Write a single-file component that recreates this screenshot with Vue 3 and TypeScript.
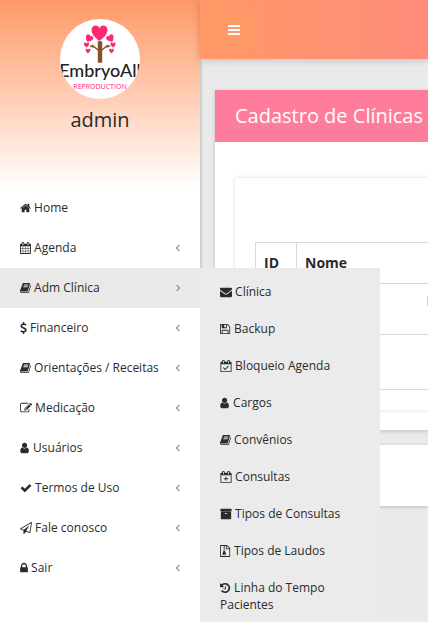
<script setup lang="ts">
import { ref } from 'vue'

interface Glyph { box: string; width: number; d: string }
interface Entry { icon: string; label: string; children?: boolean }

const calendarFrame = 'M576 448v-288q0-13-9.5-22.5t-22.5-9.5h-64q-13 0-22.5 9.5t-9.5 22.5v288q0 13 9.5 22.5t22.5 9.5h64q13 0 22.5-9.5t9.5-22.5zm768 0v-288q0-13-9.5-22.5t-22.5-9.5h-64q-13 0-22.5 9.5t-9.5 22.5v288q0 13 9.5 22.5t22.5 9.5h64q13 0 22.5-9.5t9.5-22.5zm384-64v1280q0 52-38 90t-90 38h-1408q-52 0-90-38t-38-90v-1280q0-52 38-90t90-38h128v-96q0-66 47-113t113-47h64q66 0 113 47t47 113v96h384v-96q0-66 47-113t113-47h64q66 0 113 47t47 113v96h128q52 0 90 38t38 90z'

const glyphs: Record<string, Glyph> = {
  home: { box: '64 0 1664 1792', width: 11, d: 'M1472 992v480q0 26-19 45t-45 19h-384v-384h-256v384h-384q-26 0-45-19t-19-45v-480q0-1 .5-3t.5-3l575-474 575 474q1 2 1 6zm223-69l-62 74q-8 9-21 11h-3q-13 0-21-7l-692-577-692 577q-12 8-24 7-13-2-21-11l-62-74q-8-10-7-23.5t11-21.5l719-599q32-26 76-26t76 26l244 204v-195q0-14 9-23t23-9h192q14 0 23 9t9 23v408l219 182q10 8 11 21.5t-7 23.5z' },
  calendar: { box: '64 0 1664 1792', width: 11, d: calendarFrame + 'M192 1664h288v-288h-288zM544 1664h320v-288h-320zM928 1664h320v-288h-320zM1312 1664h288v-288h-288zM192 1312h288v-320h-288zM544 1312h320v-320h-320zM928 1312h320v-320h-320zM1312 1312h288v-320h-288zM192 928h288v-288h-288zM544 928h320v-288h-320zM928 928h320v-288h-320zM1312 928h288v-288h-288z' },
  book: { box: '64 0 1664 1792', width: 11, d: 'M1703 478q40 57 18 129l-275 906q-19 64-76.5 107.5t-122.5 43.5h-923q-77 0-148.5-53.5t-99.5-131.5q-24-67-2-127 0-4 3-27t4-37q1-8-3-21.5t-3-19.5q2-11 8-21t16.5-23.5 16.5-23.5q23-38 45-91.5t30-91.5q3-10 .5-30t-.5-28q3-11 17-28t17-23q21-36 42-92t25-90q1-9-2.5-32t.5-28q4-13 22-30.5t22-22.5q19-26 42.5-84.5t27.5-96.5q1-8-3-25.5t-2-26.5q2-8 9-18t18-23 17-21q8-12 16.5-30.5t15-35 16-36 19.5-32 26.5-23.5 36-11.5 47.5 5.5l-1 3q38-9 51-9h761q74 0 114 56t18 130l-274 906q-36 119-71.5 153.5t-128.5 34.5h-869q-27 0-38 15-11 16-1 43 24 70 144 70h923q29 0 56-15.5t35-41.5l300-987q7-22 5-57 38 15 59 43zm-1064 2q-4 13 2 22.5t20 9.5h608q13 0 25.5-9.5t16.5-22.5l21-64q4-13-2-22.5t-20-9.5h-608q-13 0-25.5 9.5t-16.5 22.5zm-83 256q-4 13 2 22.5t20 9.5h608q13 0 25.5-9.5t16.5-22.5l21-64q4-13-2-22.5t-20-9.5h-608q-13 0-25.5 9.5t-16.5 22.5z' },
  dollar: { box: '384 0 1024 1792', width: 7, d: 'M1362 1185q0 153-99.5 263.5t-258.5 136.5v175q0 14-9 23t-23 9h-135q-13 0-22.5-9.5t-9.5-22.5v-175q-66-9-127.5-31t-101.5-44.5-74-48-46.5-37.5-17.5-18q-17-21-2-41l103-135q7-10 23-12 15-2 24 9l2 2q113 99 243 125 37 8 74 8 81 0 142.5-43t61.5-122q0-28-15-53t-33.5-42-58.5-37.5-66-32-80-32.5q-39-16-61.5-25t-61.5-26.5-62.5-31-56.5-35.5-53.5-42.5-43.5-49-35.5-58-21-66.5-8.5-78q0-138 98-242t255-134v-180q0-13 9.5-22.5t22.5-9.5h135q14 0 23 9t9 23v176q57 6 110.5 23t87 33.5 63.5 37.5 39 29 15 14q17 18 5 38l-81 146q-8 15-23 16-14 3-27-7-3-3-14.5-12t-39-26.5-58.5-32-74.5-26-85.5-11.5q-95 0-155 43t-60 111q0 26 8.5 48t29.5 41.5 39.5 33 56 31 60.5 27 70 27.5q53 20 81 31.5t76 35 75.5 42.5 62 50 53 63.5 31.5 76.5 13 94z' },
  edit: { box: '0 0 1792 1792', width: 12, d: 'M888 1184l116-116-152-152-116 116v56h96v96h56zm440-720q-16-16-33 1l-350 350q-17 17-1 33t33-1l350-350q17-17 1-33zm80 594v190q0 119-84.5 203.5t-203.5 84.5h-832q-119 0-203.5-84.5t-84.5-203.5v-832q0-119 84.5-203.5t203.5-84.5h832q63 0 117 25 15 7 18 23 3 17-9 29l-49 49q-14 14-32 8-23-6-45-6h-832q-66 0-113 47t-47 113v832q0 66 47 113t113 47h832q66 0 113-47t47-113v-126q0-13 9-22l64-64q15-15 35-7t20 29zm-96-738l288 288-672 672h-288v-288zm444 132l-92 92-288-288 92-92q28-28 68-28t68 28l152 152q28 28 28 68t-28 68z' },
  user: { box: '256 0 1408 1792', width: 10, d: 'M1536 1399q0 109-62.5 187t-150.5 78h-854q-88 0-150.5-78t-62.5-187q0-85 8.5-160.5t31.5-152 58.5-131 94-89 134.5-34.5q131 128 313 128t313-128q76 0 134.5 34.5t94 89 58.5 131 31.5 152 8.5 160.5zm-256-887q0 159-112.5 271.5t-271.5 112.5-271.5-112.5-112.5-271.5 112.5-271.5 271.5-112.5 271.5 112.5 112.5 271.5z' },
  check: { box: '0 0 1792 1792', width: 12, d: 'M1671 566q0 40-28 68l-724 724-136 136q-28 28-68 28t-68-28l-136-136-362-362q-28-28-28-68t28-68l136-136q28-28 68-28t68 28l294 295 656-657q28-28 68-28t68 28l136 136q28 28 28 68z' },
  plane: { box: '0 0 1792 1792', width: 12, d: 'M1764 11q33 24 27 64l-256 1536q-5 29-32 45-14 8-31 8-11 0-24-5l-527-215-298 327q-18 21-47 21-14 0-23-4-19-7-30-23.5t-11-36.5v-452l-472-193q-37-14-40-55-3-39 32-59l1664-960q35-21 68 2zm-342 1499l221-1323-1434 827 336 137 863-639-478 797z' },
  lock: { box: '320 0 1152 1792', width: 8, d: 'M640 768h512v-192q0-106-75-181t-181-75-181 75-75 181v192zm832 96v576q0 40-28 68t-68 28h-960q-40 0-68-28t-28-68v-576q0-40 28-68t68-28h32v-192q0-184 132-316t316-132 316 132 132 316v192h32q40 0 68 28t28 68z' },
  envelope: { box: '0 0 1792 1792', width: 12, d: 'M1792 710v794q0 66-47 113t-113 47h-1472q-66 0-113-47t-47-113v-794q44 49 101 87 362 246 497 345 57 42 92.5 65.5t94.5 48 110 24.5h2q51 0 110-24.5t94.5-48 92.5-65.5q170-123 498-345 57-39 100-87zm0-294q0 79-49 151t-122 123q-376 261-468 325-10 7-42.5 31t-54 38.5-52 32.5-57.5 27-50 9h-2q-23 0-50-9t-57.5-27-52-32.5-54-38.5-42.5-31q-91-64-262-182.5t-205-142.5q-62-42-117-115.5t-55-136.5q0-78 41.5-130t118.5-52h1472q65 0 112.5 47t47.5 113z' },
  floppy: { box: '128 0 1664 1792', width: 11, d: 'M512 1536h768v-384h-768v384zm896 0h128v-896q0-14-10-38.5t-20-34.5l-281-281q-10-10-34-20t-39-10v416q0 40-28 68t-68 28h-576q-40 0-68-28t-28-68v-416h-128v1280h128v-416q0-40 28-68t68-28h832q40 0 68 28t28 68v416zm-384-928v-320q0-13-9.5-22.5t-22.5-9.5h-192q-13 0-22.5 9.5t-9.5 22.5v320q0 13 9.5 22.5t22.5 9.5h192q13 0 22.5-9.5t9.5-22.5zm640 32v928q0 40-28 68t-68 28h-1344q-40 0-68-28t-28-68v-1344q0-40 28-68t68-28h928q40 0 88 20t76 48l280 280q28 28 48 76t20 88z' },
  calendarCheck: { box: '0 0 1792 1792', width: 12, d: calendarFrame + 'M192 1664h1408v-1024h-1408zM1303 964l-512 512q-10 9-23 9t-23-9l-288-288q-9-10-9-23t9-22l46-46q9-9 22-9t23 9l220 220 444-444q10-9 23-9t22 9l46 46q9 9 9 22t-9 23z' },
  calendarPlus: { box: '0 0 1792 1792', width: 12, d: calendarFrame + 'M192 1664h1408v-1024h-1408zM960 1088h224q32 0 32 32v64q0 32-32 32h-224v224q0 32-32 32h-64q-32 0-32-32v-224h-224q-32 0-32-32v-64q0-32 32-32h224v-224q0-32 32-32h64q32 0 32 32z' },
  archive: { box: '0 0 1792 1792', width: 12, d: 'M1088 832q0-26-19-45t-45-19h-256q-26 0-45 19t-19 45 19 45 45 19h256q26 0 45-19t19-45zm576-192v960q0 26-19 45t-45 19h-1408q-26 0-45-19t-19-45v-960q0-26 19-45t45-19h1408q26 0 45 19t19 45zm64-448v256q0 26-19 45t-45 19h-1536q-26 0-45-19t-19-45v-256q0-26 19-45t45-19h1536q26 0 45 19t19 45z' },
  zip: { box: '128 0 1664 1792', width: 11, d: 'M1596 380q28 28 48 76t20 88v1152q0 40-28 68t-68 28h-1344q-40 0-68-28t-28-68v-1600q0-40 28-68t68-28h896q40 0 88 20t76 48zm-444-244v376h376q-10-29-22-41l-313-313q-12-12-41-22zm384 1528v-1024h-416q-40 0-68-28t-28-68v-416h-128v128h-128v-128h-512v1536h1280zM640 256h128v128h-128zM768 384h128v128h-128zM640 512h128v128h-128zM768 640h128v128h-128zM640 768h128v128h64q56 0 74 56l102 336q16 54 16 88 0 76-73 122t-183 46-183-46-73-122q0-34 16-88l112-360zM768 1344q-128 0-128 64t128 64 128-64-128-64z' },
  history: { box: '128 0 1664 1792', width: 11, d: 'M1664 896q0 156-61 298t-164 245-245 164-298 61q-172 0-327-72.5t-264-204.5q-7-10-6.5-22.5t8.5-20.5l137-138q10-9 25-9 16 2 23 12 73 95 179 147t225 52q104 0 198.5-40.5t163.5-109.5 109.5-163.5 40.5-198.5-40.5-198.5-109.5-163.5-163.5-109.5-198.5-40.5q-98 0-188 35.5t-160 101.5l137 138q31 30 14 69-17 40-59 40h-448q-26 0-45-19t-19-45v-448q0-42 40-59 39-17 69 14l130 129q107-101 244.5-156.5t284.5-55.5q156 0 298 61t245 164 164 245 61 298zm-640-288v448q0 14-9 23t-23 9h-320q-14 0-23-9t-9-23v-64q0-14 9-23t23-9h224v-352q0-14 9-23t23-9h64q14 0 23 9t9 23z' },
}

const menu: Entry[] = [
  { icon: 'home', label: 'Home' },
  { icon: 'calendar', label: 'Agenda', children: true },
  { icon: 'book', label: 'Adm Clínica', children: true },
  { icon: 'dollar', label: 'Financeiro', children: true },
  { icon: 'book', label: 'Orientações / Receitas', children: true },
  { icon: 'edit', label: 'Medicação', children: true },
  { icon: 'user', label: 'Usuários', children: true },
  { icon: 'check', label: 'Termos de Uso', children: true },
  { icon: 'plane', label: 'Fale conosco', children: true },
  { icon: 'lock', label: 'Sair', children: true },
]

const submenu: Entry[] = [
  { icon: 'envelope', label: 'Clínica' },
  { icon: 'floppy', label: 'Backup' },
  { icon: 'calendarCheck', label: 'Bloqueio Agenda' },
  { icon: 'user', label: 'Cargos' },
  { icon: 'book', label: 'Convênios' },
  { icon: 'calendarPlus', label: 'Consultas' },
  { icon: 'archive', label: 'Tipos de Consultas' },
  { icon: 'zip', label: 'Tipos de Laudos' },
  { icon: 'history', label: 'Linha do Tempo Pacientes' },
]

const open = ref('Adm Clínica')
</script>

<template>
  <div class="shell">
    <aside class="sidebar">
      <div class="profile">
        <svg class="logo" viewBox="0 0 80 80" width="80" height="80" role="img">
          <defs>
            <clipPath id="disc"><circle cx="40" cy="40" r="40" /></clipPath>
            <path id="heart" d="M0 8C-4 5-8 1-8-3C-8-8-2-9 0-5C2-9 8-8 8-3C8 1 4 5 0 8Z" />
          </defs>
          <g clip-path="url(#disc)">
            <rect width="80" height="80" fill="#fff" />
            <path d="M38.500 23h3v20h-3zM38 31l-6-5M34 28l-4-1M42 31l6-5M46 28l4-1" fill="#85522b" stroke="#85522b" stroke-width="1.400" />
            <g fill="#ff2672">
              <use href="#heart" transform="translate(39.500 14)" />
              <use href="#heart" transform="translate(29 19.500) rotate(30) scale(.48)" />
              <use href="#heart" transform="translate(50.500 19.500) rotate(-30) scale(.48)" />
              <use href="#heart" transform="translate(26.500 26) scale(.32)" />
              <use href="#heart" transform="translate(53 26) scale(.32)" />
              <use href="#heart" transform="translate(28 32) scale(.3)" />
              <use href="#heart" transform="translate(51.500 32) scale(.3)" />
            </g>
            <text class="brand" x="40" y="58" text-anchor="middle">EmbryoAll</text>
            <text class="tagline" x="40" y="70" text-anchor="middle">REPRODUCTION</text>
          </g>
        </svg>
        <span class="username">admin</span>
      </div>
      <ul class="menu">
        <li v-for="item in menu" :key="item.label">
          <a href="#" class="link" :class="{ active: open === item.label }" @click.prevent="open = item.label">
            <span>
              <svg class="icon" :viewBox="glyphs[item.icon].box" :width="glyphs[item.icon].width" height="12"><path fill-rule="evenodd" :d="glyphs[item.icon].d" /></svg>
              {{ item.label }}
            </span>
            <svg v-if="item.children" class="arrow" viewBox="0 0 4 8" width="4" height="8"><path :d="open === item.label ? 'M.5 1L3.500 4L.5 7' : 'M3.500 1L.5 4L3.500 7'" /></svg>
          </a>
          <ul v-if="item.label === 'Adm Clínica' && open === item.label" class="submenu">
            <li v-for="sub in submenu" :key="sub.label">
              <a href="#" class="sublink" @click.prevent>
                <svg class="icon" :viewBox="glyphs[sub.icon].box" :width="glyphs[sub.icon].width" height="12"><path fill-rule="evenodd" :d="glyphs[sub.icon].d" /></svg>
                {{ sub.label }}
              </a>
            </li>
          </ul>
        </li>
      </ul>
    </aside>

    <div class="page">
      <header class="topbar">
        <button class="toggle" type="button" aria-label="Menu">
          <svg viewBox="0 0 12 10" width="12" height="10"><path d="M0 0h12v2H0zM0 4h12v2H0zM0 8h12v2H0z" fill="#fff" /></svg>
        </button>
      </header>
      <main class="content">
        <section class="card">
          <h1 class="title">Cadastro de Clínicas</h1>
          <div class="card-body">
            <div class="panel">
              <table>
                <thead>
                  <tr><th class="id">ID</th><th>Nome</th></tr>
                </thead>
                <tbody>
                  <tr class="record"><td></td><td><span class="marker"></span></td></tr>
                  <tr class="controls"><td></td><td></td></tr>
                </tbody>
              </table>
            </div>
          </div>
        </section>
        <section class="card footer-card"></section>
      </main>
    </div>
  </div>
</template>

<style>
body { margin: 0; }
</style>

<style scoped>
.shell {
  display: flex;
  height: 100vh;
  overflow: hidden;
  background: #eaeaea;
  color: #292b2c;
  font-family: "Open Sans", sans-serif;
}
ul { list-style: none; margin: 0; padding: 0; }
a { color: inherit; text-decoration: none; }

.sidebar {
  position: relative;
  z-index: 1;
  flex: 0 0 200px;
  background: #fff;
  box-shadow: 1px 0 3px rgba(0, 0, 0, 0.2);
}
.profile {
  display: flex;
  flex-direction: column;
  align-items: center;
  box-sizing: border-box;
  height: 188px;
  padding-top: 19px;
  background: linear-gradient(#ff9966, #fff);
}
.logo { display: block; }
.brand { font-family: Lato, sans-serif; font-size: 18px; font-weight: 500; fill: #222; }
.tagline { font-size: 7px; fill: #ff2672; }
.username { margin-top: 7px; font-size: 20px; line-height: 28px; }

.menu { font-size: 12px; }
.menu > li { position: relative; }
.link {
  display: flex;
  align-items: center;
  justify-content: space-between;
  padding: 10px 20px;
  line-height: 20px;
}
.link.active { background: #e9e9e9; }
.icon { vertical-align: -2px; fill: #292b2c; }
.arrow { fill: none; stroke: #555; stroke-width: 1; }
.submenu {
  position: absolute;
  top: 0;
  left: 100%;
  width: 180px;
  padding: 5px 0;
  background: #ebebeb;
}
.sublink { display: block; padding: 10px 20px; line-height: 17px; }

.page { flex: 1; min-width: 0; }
.topbar {
  position: relative;
  z-index: 2;
  display: flex;
  align-items: center;
  box-sizing: border-box;
  height: 59px;
  padding: 0 14px;
  background: linear-gradient(to right, #ff9966, #ff8c7c);
  box-shadow: 0 1px 8px rgba(0, 0, 0, 0.2);
}
.toggle {
  display: flex;
  align-items: center;
  justify-content: center;
  width: 40px;
  height: 34px;
  padding: 0;
  border: 0;
  border-radius: 4px;
  background: #ff9966;
}
.content {
  display: flex;
  flex-direction: column;
  gap: 15px;
  padding: 31px 0 0 15px;
}
.card { background: #fff; box-shadow: 0 1px 4px rgba(0, 0, 0, 0.2); }
.title {
  margin: 0;
  padding: 12px 20px;
  background: #ff7c9c;
  color: #fff;
  font-size: 20px;
  font-weight: 400;
  line-height: 28px;
  white-space: nowrap;
}
.card-body { padding: 36px 0 20px 20px; }
.panel { padding: 64px 0 20px 20px; box-shadow: 0 0 4px rgba(0, 0, 0, 0.15); }
table { width: 100%; border-collapse: collapse; font-size: 14px; }
th, td { box-sizing: border-box; padding: 0 8px; border: 1px solid #d9d9d9; border-right: 0; text-align: left; }
th { height: 41px; padding-bottom: 2px; font-weight: 700; }
td { border-left: 0; }
td:last-child { padding-right: 0; text-align: right; vertical-align: top; }
.id { width: 41px; }
.record { height: 51px; }
.controls { height: 55px; }
.marker { display: inline-block; width: 1px; height: 10px; margin-top: 12px; background: #ffc58a; }
.footer-card { height: 61px; }
</style>
